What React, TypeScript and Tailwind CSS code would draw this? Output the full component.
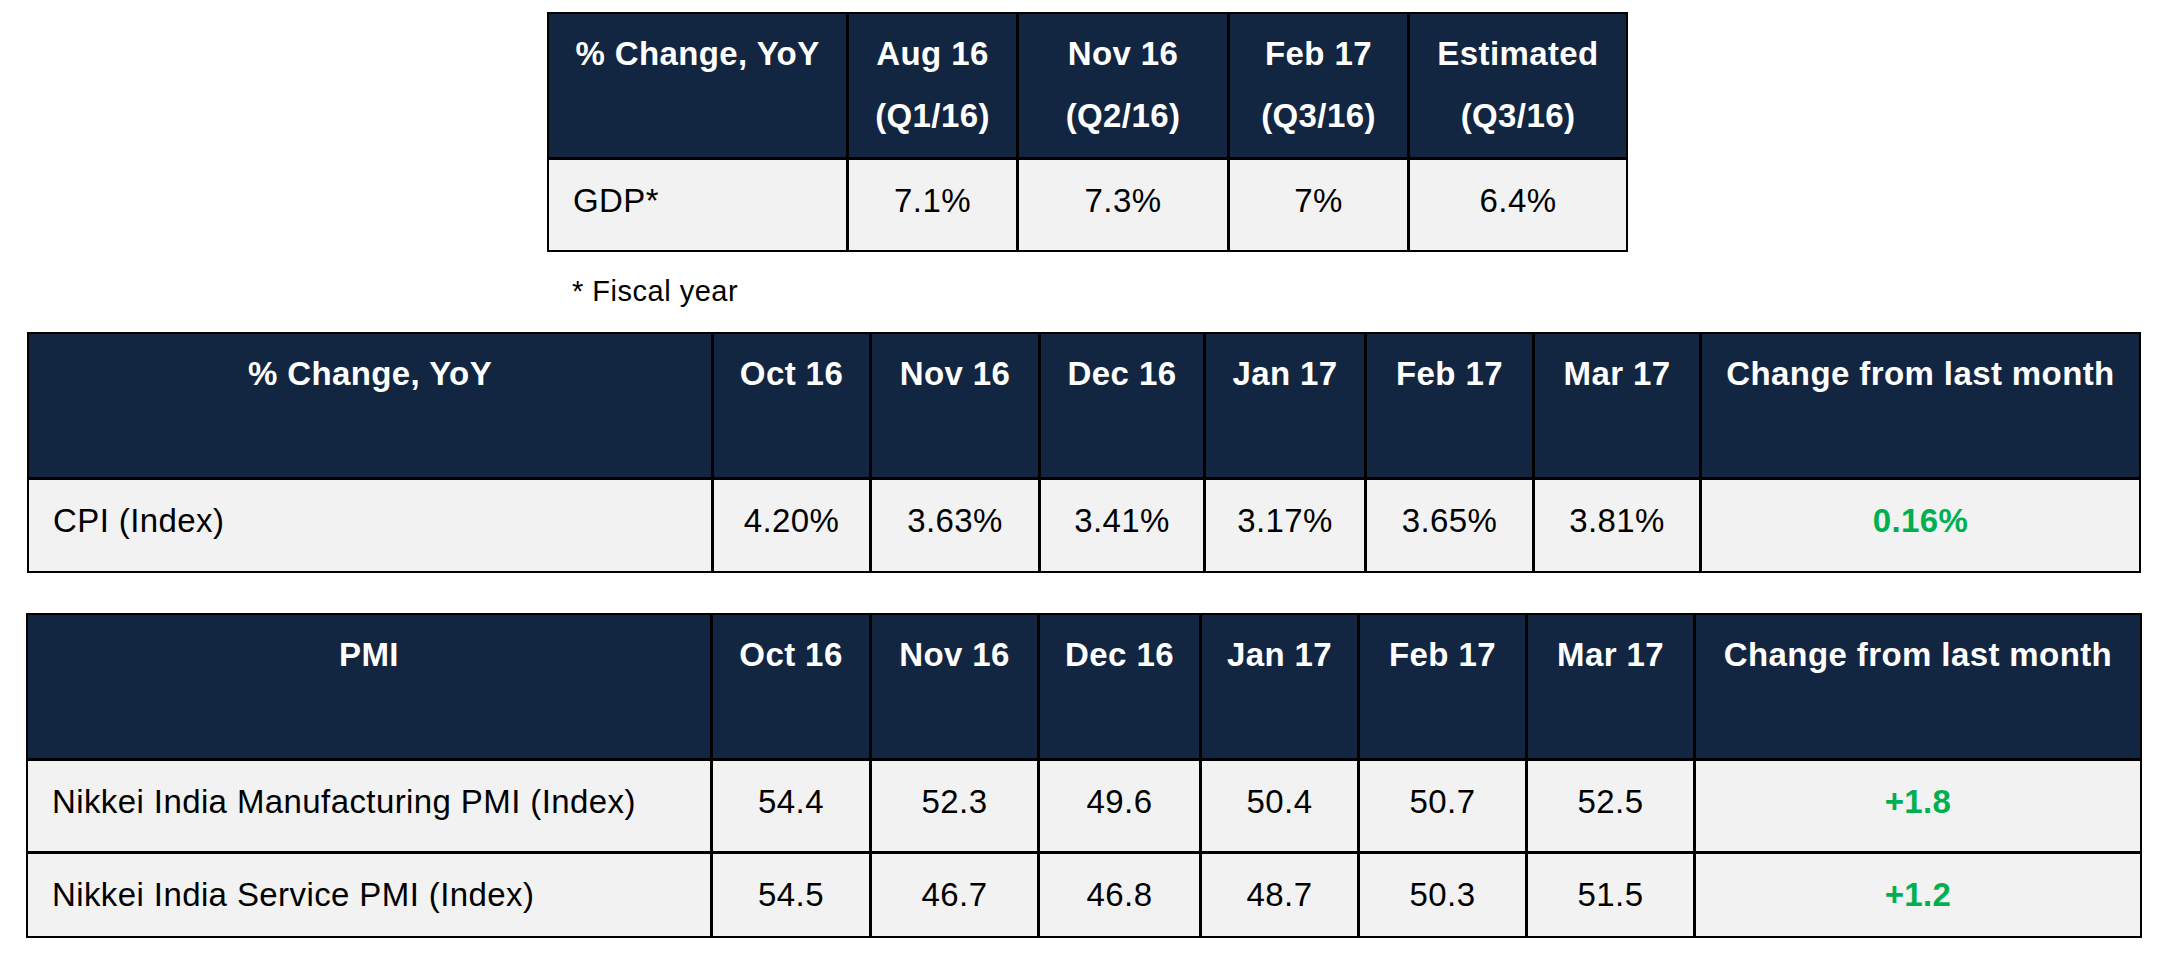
import React from "react";

const H = ({ children }: { children: React.ReactNode }) => (
  <div className="bg-[#132641] text-white font-bold text-center pt-[9px] whitespace-nowrap">{children}</div>
);

const D = ({ children, left, green }: { children: React.ReactNode; left?: boolean; green?: boolean }) => (
  <div
    className={
      left
        ? "bg-[#f2f2f2] text-black text-left pl-[24px] pt-[10px] whitespace-nowrap"
        : green
        ? "bg-[#f2f2f2] text-[#00b050] font-bold text-center pt-[10px] whitespace-nowrap"
        : "bg-[#f2f2f2] text-black text-center pt-[10px] whitespace-nowrap"
    }
  >
    {children}
  </div>
);

const months = ["Oct 16", "Nov 16", "Dec 16", "Jan 17", "Feb 17", "Mar 17"];

export default function App() {
  return (
    <div className="w-[2162px] h-[962px] bg-white pt-[12px] font-['Liberation_Sans',Arial,sans-serif] text-[33px] leading-[62px] tracking-[0.4px] overflow-hidden">
      <div className="ml-[547px] w-[1081px] grid grid-cols-[297px_167px_208px_177px_216px] grid-rows-[143px_90px] gap-[3px] p-[2px] bg-black">
        <H>% Change, YoY</H>
        <H>
          Aug 16
          <br />
          (Q1/16)
        </H>
        <H>
          Nov 16
          <br />
          (Q2/16)
        </H>
        <H>
          Feb 17
          <br />
          (Q3/16)
        </H>
        <H>
          Estimated
          <br />
          (Q3/16)
        </H>
        <D left>GDP*</D>
        <D>7.1%</D>
        <D>7.3%</D>
        <D>7%</D>
        <D>6.4%</D>
      </div>

      <div className="ml-[572px] mt-[23px] text-[29px] leading-[32px] tracking-[0.5px] text-black">* Fiscal year</div>

      <div className="ml-[27px] mt-[25px] w-[2114px] grid grid-cols-[682px_155px_166px_162px_158px_165px_164px_437px] grid-rows-[143px_91px] gap-[3px] p-[2px] bg-black">
        <H>% Change, YoY</H>
        {months.map((m) => (
          <H key={m}>{m}</H>
        ))}
        <H>Change from last month</H>
        <D left>CPI (Index)</D>
        <D>4.20%</D>
        <D>3.63%</D>
        <D>3.41%</D>
        <D>3.17%</D>
        <D>3.65%</D>
        <D>3.81%</D>
        <D green>0.16%</D>
      </div>

      <div className="ml-[26px] mt-[40px] w-[2116px] grid grid-cols-[682px_156px_165px_159px_155px_165px_165px_444px] grid-rows-[143px_90px_82px] gap-[3px] p-[2px] bg-black">
        <H>PMI</H>
        {months.map((m) => (
          <H key={m}>{m}</H>
        ))}
        <H>Change from last month</H>
        <D left>Nikkei India Manufacturing PMI (Index)</D>
        <D>54.4</D>
        <D>52.3</D>
        <D>49.6</D>
        <D>50.4</D>
        <D>50.7</D>
        <D>52.5</D>
        <D green>+1.8</D>
        <D left>Nikkei India Service PMI (Index)</D>
        <D>54.5</D>
        <D>46.7</D>
        <D>46.8</D>
        <D>48.7</D>
        <D>50.3</D>
        <D>51.5</D>
        <D green>+1.2</D>
      </div>
    </div>
  );
}
